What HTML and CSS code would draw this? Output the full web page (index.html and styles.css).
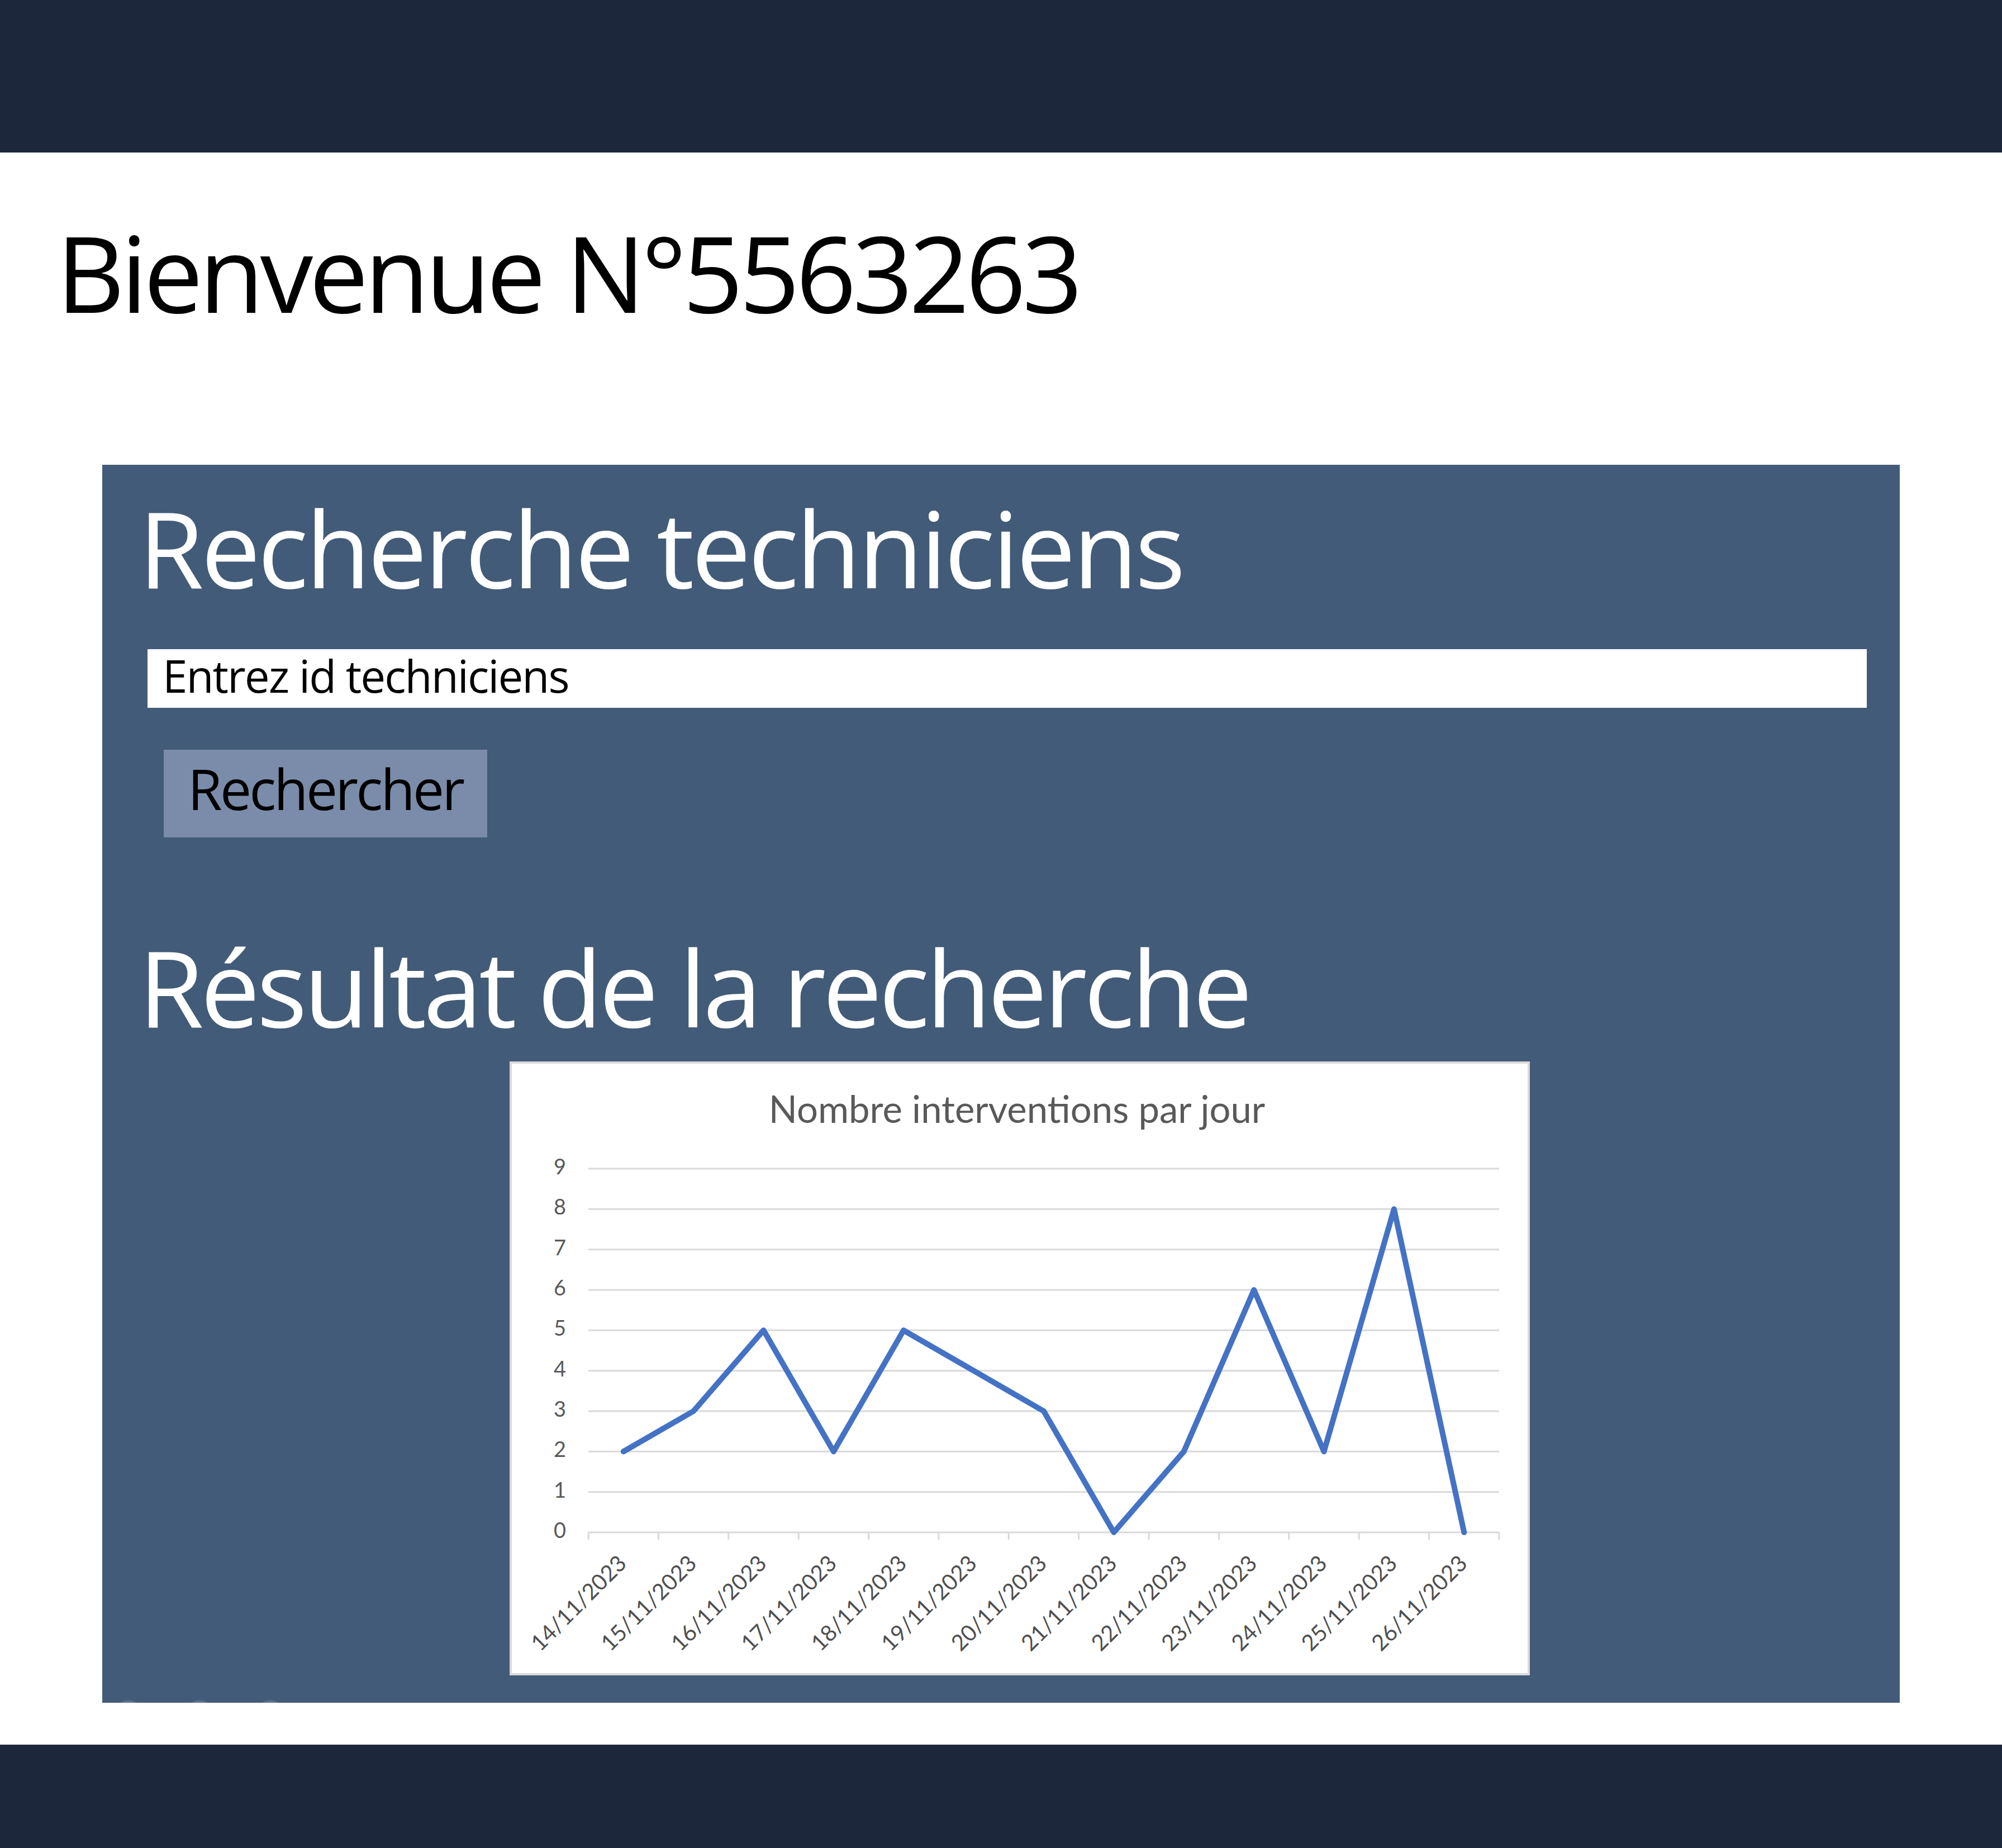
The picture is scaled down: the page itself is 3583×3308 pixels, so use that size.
FILE: index.html
```html
<!DOCTYPE html>
<html lang="fr">
<head>
<meta charset="utf-8">
<title>Bienvenue</title>
<link rel="stylesheet" href="styles.css">
</head>
<body>
<header class="topbar"></header>
<h1 class="welcome">Bienvenue N°5563263</h1>
<main class="panel">
  <h2 class="panel-title">Recherche techniciens</h2>
  <input class="search-input" type="text" placeholder="Entrez id techniciens">
  <button class="search-btn" type="button">Rechercher</button>
  <h2 class="panel-title result-title">Résultat de la recherche</h2>
  <figure class="chart">
    <svg class="chart-svg" width="1826" height="1099" viewBox="0 0 1826 1099" xmlns="http://www.w3.org/2000/svg">
      <rect x="2" y="2" width="1822" height="1095" fill="#ffffff" stroke="#dadada" stroke-width="4"/>
      <text class="chart-title" x="908" y="110" text-anchor="middle">Nombre interventions par jour</text>
      <g stroke="#d9d9d9" stroke-width="3">
        <line x1="141" y1="192" x2="1771" y2="192"/>
        <line x1="141" y1="264.3" x2="1771" y2="264.3"/>
        <line x1="141" y1="336.7" x2="1771" y2="336.7"/>
        <line x1="141" y1="409" x2="1771" y2="409"/>
        <line x1="141" y1="481.3" x2="1771" y2="481.3"/>
        <line x1="141" y1="553.7" x2="1771" y2="553.7"/>
        <line x1="141" y1="626" x2="1771" y2="626"/>
        <line x1="141" y1="698.3" x2="1771" y2="698.3"/>
        <line x1="141" y1="770.7" x2="1771" y2="770.7"/>
        <line x1="141" y1="843" x2="1771" y2="843"/>
        <line x1="141" y1="843" x2="141" y2="856"/>
        <line x1="266.4" y1="843" x2="266.4" y2="856"/>
        <line x1="391.8" y1="843" x2="391.8" y2="856"/>
        <line x1="517.2" y1="843" x2="517.2" y2="856"/>
        <line x1="642.5" y1="843" x2="642.5" y2="856"/>
        <line x1="767.9" y1="843" x2="767.9" y2="856"/>
        <line x1="893.3" y1="843" x2="893.3" y2="856"/>
        <line x1="1018.7" y1="843" x2="1018.7" y2="856"/>
        <line x1="1144.1" y1="843" x2="1144.1" y2="856"/>
        <line x1="1269.5" y1="843" x2="1269.5" y2="856"/>
        <line x1="1394.8" y1="843" x2="1394.8" y2="856"/>
        <line x1="1520.2" y1="843" x2="1520.2" y2="856"/>
        <line x1="1645.6" y1="843" x2="1645.6" y2="856"/>
        <line x1="1771" y1="843" x2="1771" y2="856"/>
      </g>
      <g class="y-labels" text-anchor="end">
        <text x="101" y="853">0</text>
        <text x="101" y="780.7">1</text>
        <text x="101" y="708.3">2</text>
        <text x="101" y="636">3</text>
        <text x="101" y="563.7">4</text>
        <text x="101" y="491.3">5</text>
        <text x="101" y="419">6</text>
        <text x="101" y="346.7">7</text>
        <text x="101" y="274.3">8</text>
        <text x="101" y="202">9</text>
      </g>
      <g class="x-labels" text-anchor="end">
        <text x="211.7" y="901" transform="rotate(-45 211.7 901)">14/11/2023</text>
        <text x="337.1" y="901" transform="rotate(-45 337.1 901)">15/11/2023</text>
        <text x="462.5" y="901" transform="rotate(-45 462.5 901)">16/11/2023</text>
        <text x="587.9" y="901" transform="rotate(-45 587.9 901)">17/11/2023</text>
        <text x="713.2" y="901" transform="rotate(-45 713.2 901)">18/11/2023</text>
        <text x="838.6" y="901" transform="rotate(-45 838.6 901)">19/11/2023</text>
        <text x="964" y="901" transform="rotate(-45 964 901)">20/11/2023</text>
        <text x="1089.4" y="901" transform="rotate(-45 1089.4 901)">21/11/2023</text>
        <text x="1214.8" y="901" transform="rotate(-45 1214.8 901)">22/11/2023</text>
        <text x="1340.2" y="901" transform="rotate(-45 1340.2 901)">23/11/2023</text>
        <text x="1465.5" y="901" transform="rotate(-45 1465.5 901)">24/11/2023</text>
        <text x="1590.9" y="901" transform="rotate(-45 1590.9 901)">25/11/2023</text>
        <text x="1716.3" y="901" transform="rotate(-45 1716.3 901)">26/11/2023</text>
      </g>
      <polyline fill="none" stroke="#4472c4" stroke-width="10" stroke-linejoin="round" stroke-linecap="round"
        points="203.7,698.3 329.1,626 454.5,481.3 579.9,698.3 705.2,481.3 830.6,553.7 956,626 1081.4,843 1206.8,698.3 1332.2,409 1457.5,698.3 1582.9,264.3 1708.3,843"/>
    </svg>
  </figure>
  <div class="dots"><span class="dot"></span><span class="dot"></span><span class="dot"></span></div>
</main>
<footer class="bottombar"></footer>
</body>
</html>
```

FILE: styles.css
```css
html, body {
  margin: 0;
  padding: 0;
  background: #ffffff;
}

body {
  font-family: "Open Sans", "Noto Sans", sans-serif;
  width: 3583px;
}

.topbar {
  height: 273px;
  background: #1d273b;
}

.welcome {
  margin: 119px 0 0 101px;
  font-size: 189px;
  line-height: 189px;
  font-weight: 400;
  letter-spacing: -0.036em;
  color: #000000;
}

.panel {
  position: relative;
  overflow: hidden;
  margin: 251px 183px 0 183px;
  padding: 53px 59px 49px 65px;
  background: #425b78;
  display: flex;
  flex-direction: column;
  align-items: flex-start;
}

.panel-title {
  margin: 0;
  font-size: 189px;
  line-height: 189px;
  font-weight: 400;
  letter-spacing: -0.025em;
  color: #ffffff;
  white-space: nowrap;
}

.search-input {
  align-self: stretch;
  box-sizing: border-box;
  margin: 88px 0 0 16px;
  height: 105px;
  padding: 0 0 12px 27px;
  border: 0;
  outline: none;
  background: #ffffff;
  font-family: "Open Sans", "Noto Sans", sans-serif;
  font-size: 80px;
  letter-spacing: -0.025em;
  color: #000000;
}

.search-input::placeholder {
  color: #000000;
  opacity: 1;
}

.search-btn {
  box-sizing: border-box;
  margin: 75px 0 0 45px;
  width: 579px;
  height: 157px;
  padding: 0 0 18px 43px;
  border: 0;
  background: #7a8ca9;
  font-family: "Open Sans", "Noto Sans", sans-serif;
  font-size: 100px;
  line-height: 139px;
  letter-spacing: -0.038em;
  text-align: left;
  color: #000000;
}

.result-title {
  margin-top: 172px;
  letter-spacing: -0.03em;
}

.chart {
  margin: 40px 0 0 664px;
  width: 1826px;
  height: 1099px;
  background: #ffffff;
}

.chart-svg {
  display: block;
}

.chart-title {
  font-family: Lato, "Open Sans", sans-serif;
  font-size: 67px;
  fill: #595959;
}

.y-labels {
  font-family: Lato, "Open Sans", sans-serif;
  font-size: 38px;
  fill: #595959;
}

.x-labels {
  font-family: Lato, "Open Sans", sans-serif;
  font-size: 40px;
  fill: #4f4f4f;
}

.dots {
  position: absolute;
  left: 22px;
  bottom: -45px;
  display: flex;
  gap: 77px;
}

.dot {
  width: 50px;
  height: 50px;
  border-radius: 50%;
  background: radial-gradient(circle, rgba(255, 255, 255, 0.45) 0%, rgba(255, 255, 255, 0.15) 60%, rgba(255, 255, 255, 0) 100%);
}

.bottombar {
  margin-top: 75px;
  height: 185px;
  background: #1d273b;
}
```
